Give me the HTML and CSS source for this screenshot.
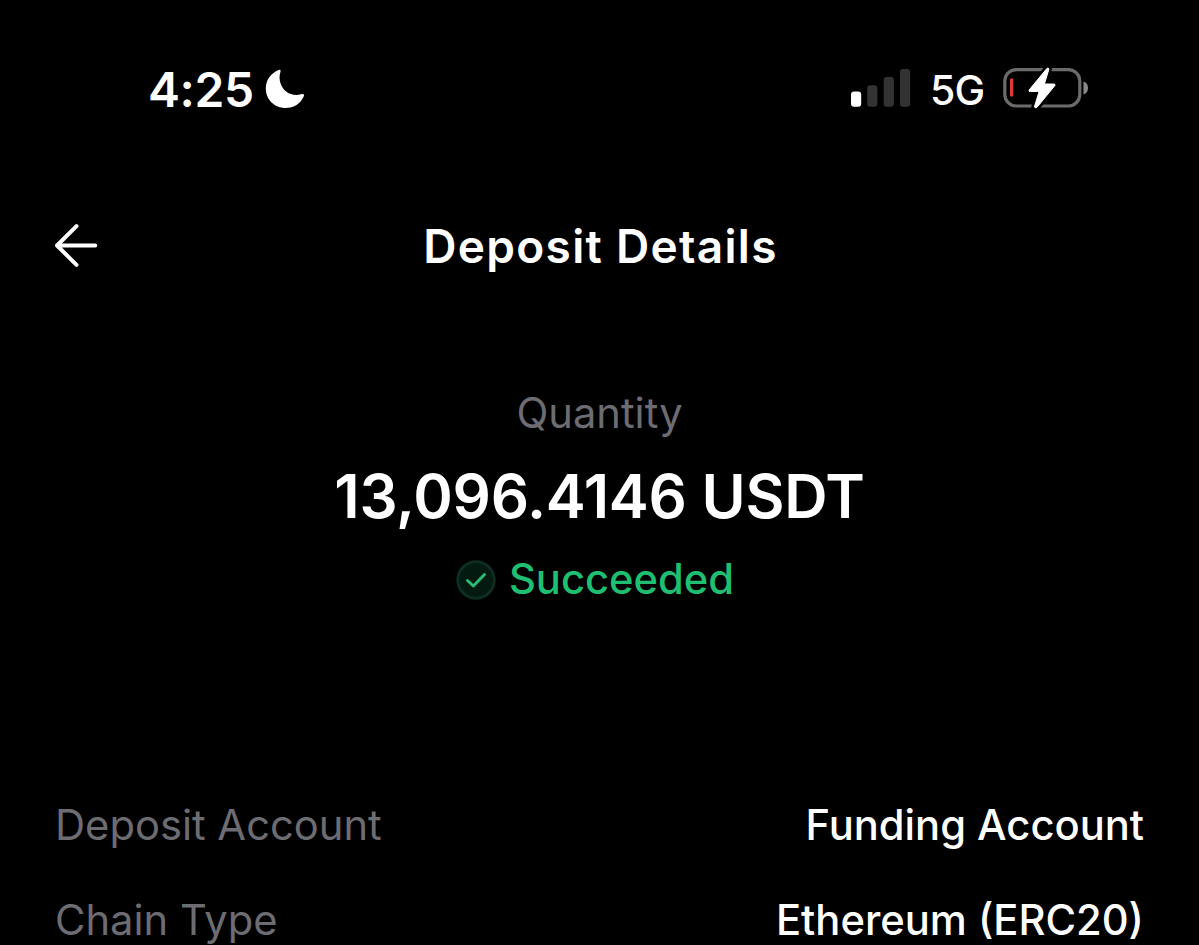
FILE: index.html
```html
<!DOCTYPE html>
<html lang="en">
<head>
    <meta charset="UTF-8">
    <meta name="viewport" content="width=device-width, initial-scale=1.0">
    <title>Deposit Details</title>
    <link rel="stylesheet" href="styles.css">
</head>
<body>
    <div class="status-bar">
        <div class="status-left">
            <span class="time">4:25</span>
            <svg class="moon" viewBox="0 0 40 40" fill="#fff">
                <path d="M13.6 1.1 C15 .4 16 1.3 15.5 2.7 C14.3 6 14.2 10.5 15.6 14.5 C18.5 23 26.5 27.6 36 25.3 C38.5 24.5 39.6 25.3 38.8 27.2 C35.7 34.5 28.7 39 20.7 39 C9.5 39 .8 30.5 .8 19.5 C.8 11 6.3 4 13.6 1.1 Z"/>
            </svg>
        </div>
        <div class="status-right">
            <svg class="signal" viewBox="0 0 60 38">
                <rect x="0" y="22.5" width="10.2" height="15.3" rx="3" fill="#fff"/>
                <rect x="16.2" y="16.3" width="10.2" height="21.5" rx="3" fill="#333"/>
                <rect x="32.7" y="8" width="10.2" height="29.8" rx="3" fill="#333"/>
                <rect x="49" y="0" width="10.2" height="37.8" rx="3" fill="#333"/>
            </svg>
            <span class="network">5G</span>
            <svg class="battery" viewBox="0 0 86 42">
                <rect x="1.8" y="2.6" width="75" height="36.4" rx="11.5" fill="none" stroke="#6b6b6d" stroke-width="3.2"/>
                <path d="M80.5 14.5 C83.5 15.5 85 18 85 21 C85 24 83.5 26.5 80.5 27.5 Z" fill="#8a8a8c"/>
                <rect x="7" y="11.5" width="3.2" height="18" rx=".8" fill="#e0393e"/>
                <path d="M43.8 1.6 L26.1 23 Q25.3 24.5 27.1 24.5 H36.1 L31.4 39.8 Q32.1 41.8 34.1 40.2 L51.9 18.6 Q52.6 17 50.8 17 H41.4 L45.9 2.2 Q45.4 0 43.8 1.6 Z" fill="#000" stroke="#000" stroke-width="6"/>
                <path d="M43.8 1.6 L26.1 23 Q25.3 24.5 27.1 24.5 H36.1 L31.4 39.8 Q32.1 41.8 34.1 40.2 L51.9 18.6 Q52.6 17 50.8 17 H41.4 L45.9 2.2 Q45.4 0 43.8 1.6 Z" fill="#fff" stroke="#fff" stroke-width="1" stroke-linejoin="round"/>
            </svg>
        </div>
    </div>

    <header class="nav">
        <svg class="back" viewBox="0 0 44 44" fill="none" stroke="#fff" stroke-width="4" stroke-linecap="round" stroke-linejoin="round">
            <path d="M22.5 2.2 L3 21.5 L22.5 40.8 M3 21.5 H41.3"/>
        </svg>
        <h1>Deposit Details</h1>
    </header>

    <section class="summary">
        <div class="label">Quantity</div>
        <div class="amount">13,096.4146 USDT</div>
        <div class="status">
            <svg class="check" viewBox="0 0 40 40" fill="none">
                <circle cx="20" cy="20" r="18.2" fill="#021a10" stroke="#0e2c20" stroke-width="3"/>
                <path d="M11.5 20.5 L17.3 26 L28.5 14.5" stroke="#2abc78" stroke-width="2.9" stroke-linecap="round" stroke-linejoin="round"/>
            </svg>
            <span>Succeeded</span>
        </div>
    </section>

    <section class="details">
        <div class="row">
            <span class="name">Deposit Account</span>
            <span class="value">Funding Account</span>
        </div>
        <div class="row">
            <span class="name">Chain Type</span>
            <span class="value">Ethereum (ERC20)</span>
        </div>
    </section>
</body>
</html>
```
FILE: styles.css
```css
* {
    margin: 0;
    padding: 0;
    box-sizing: border-box;
}

body {
    height: 100vh;
    overflow: hidden;
    background: #000;
    color: #fff;
    font-family: Inter, 'Liberation Sans', sans-serif;
}

svg {
    display: block;
    flex-shrink: 0;
}

.status-bar {
    display: flex;
    justify-content: space-between;
    height: 178px;
    padding: 0 110px 0 148px;
}

.status-left,
.status-right {
    display: flex;
    align-items: center;
}

.time {
    width: 117px;
    font-size: 48px;
    font-weight: 600;
    letter-spacing: -0.4px;
    white-space: nowrap;
}

.moon {
    width: 40px;
    height: 40px;
}

.signal {
    width: 60px;
    height: 38px;
    margin-top: -3px;
    margin-right: 19px;
}

.network {
    width: 73px;
    font-size: 41px;
    font-weight: 500;
    line-height: 50px;
    letter-spacing: -0.8px;
    padding-top: 2px;
}

.battery {
    width: 86px;
    height: 42px;
    margin-top: -2px;
}

.nav {
    display: grid;
    grid-template-columns: 44px 1fr 44px;
    align-items: center;
    height: 136px;
    padding: 0 54px;
}

.back {
    width: 44px;
    height: 44px;
}

.nav h1 {
    padding-left: 2px;
    font-size: 46px;
    font-weight: 600;
    letter-spacing: 1.3px;
    text-align: center;
}

.summary {
    display: flex;
    flex-direction: column;
    align-items: center;
    padding-top: 74px;
}

.label {
    font-size: 41.7px;
    line-height: 50px;
    color: #6c6c72;
}

.amount {
    margin-top: 22px;
    font-size: 60px;
    font-weight: 600;
    line-height: 72px;
    letter-spacing: -0.25px;
}

.status {
    display: flex;
    align-items: center;
    gap: 13px;
    margin-top: 23px;
    padding-right: 9px;
    font-size: 41.7px;
    font-weight: 500;
    line-height: 49px;
    color: #1fbf72;
}

.check {
    width: 40px;
    height: 40px;
}

.details {
    display: flex;
    flex-direction: column;
    gap: 35px;
    margin-top: 191px;
    padding: 0 55px;
}

.row {
    display: flex;
    justify-content: space-between;
    font-size: 41.7px;
    line-height: 60px;
}

.name {
    color: #6c6c72;
}

.value {
    font-weight: 500;
}
```
